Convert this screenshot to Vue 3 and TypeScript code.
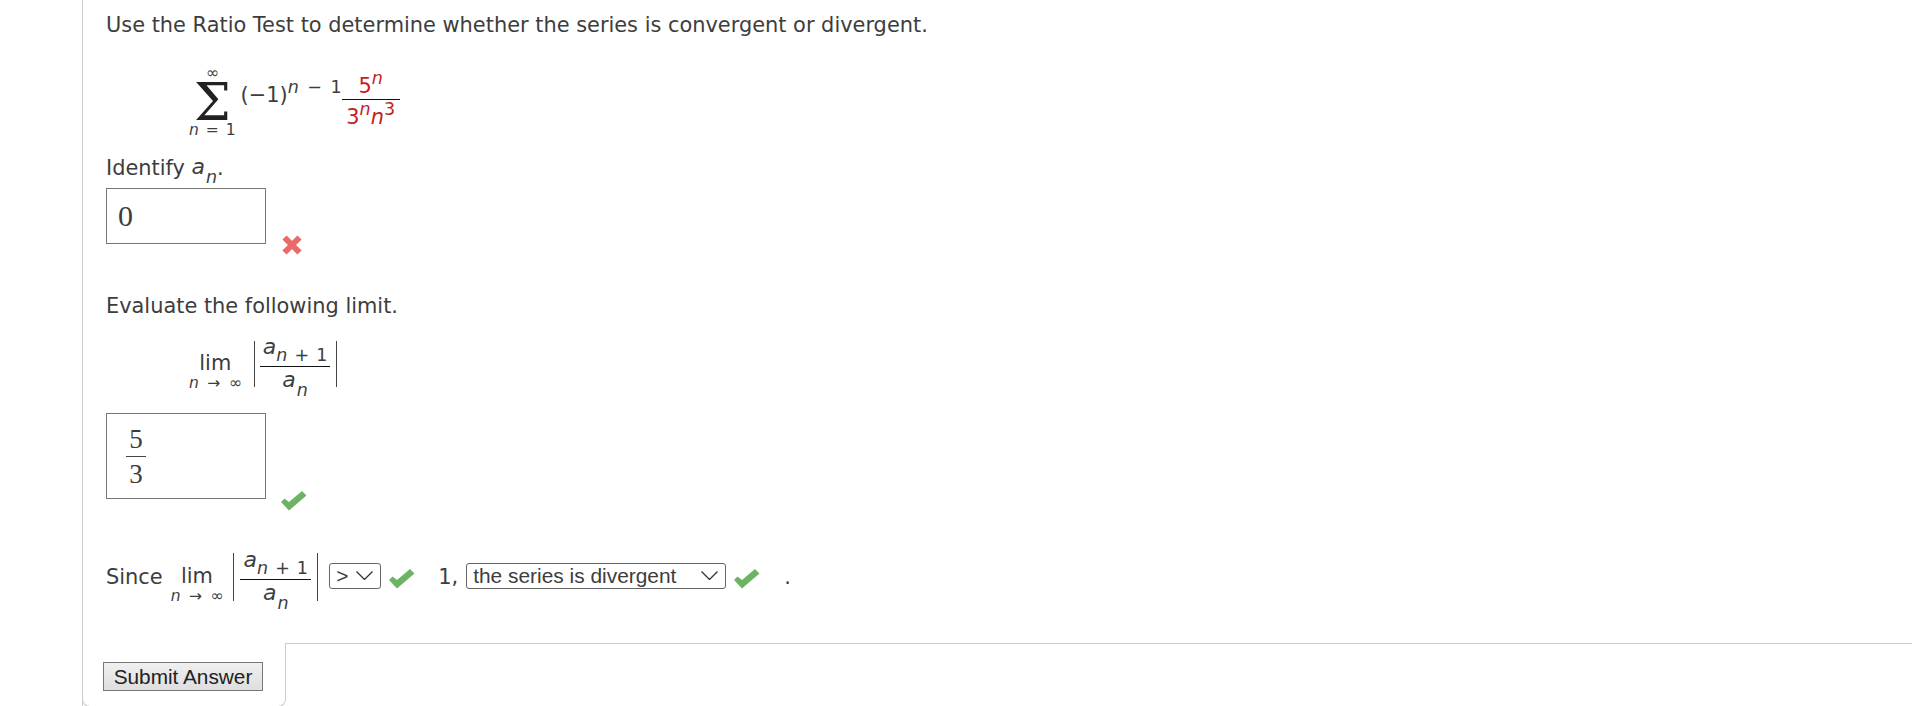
<script setup lang="ts">
const checkPath = 'M0 11 L3.500 7.500 L8 11 L21 0 L25.500 4.500 L8 19.500 Z'
const chevronPath = 'M0.500 0.500 L8.500 8.500 L16.500 0.500'
</script>

<template>
  <div class="page">
    <div class="card">
      <p class="line first">Use the Ratio Test to determine whether the series is convergent or divergent.</p>

      <div class="sum-block">
        <span class="sum">
          <span class="limit">∞</span>
          <span class="sigma">Σ</span>
          <span class="limit"><i>n</i> = 1</span>
        </span>
        <span class="term">(−1)<sup><i>n</i> − 1</sup></span>
        <span class="frac red">
          <span class="num">5<sup><i>n</i></sup></span>
          <span class="den">3<sup><i>n</i></sup><i>n</i><sup>3</sup></span>
        </span>
      </div>

      <p class="line identify">Identify <i class="big-a">a</i><sub><i>n</i></sub>.</p>
      <div class="answer-row">
        <div class="answer short"><span class="serif-num">0</span></div>
        <svg class="mark cross" width="22" height="22" viewBox="0 0 22 22">
          <path d="M3.500 3.500 L18.500 18.500 M18.500 3.500 L3.500 18.500" fill="none" stroke="#e96a6a" stroke-width="6" />
        </svg>
      </div>

      <p class="line evaluate">Evaluate the following limit.</p>

      <div class="lim-block">
        <span class="lim">
          <span class="lim-word">lim</span>
          <span class="limit arrow"><i>n</i> → ∞</span>
        </span>
        <span class="abs">
          <span class="frac">
            <span class="num"><i class="big-a">a</i><sub><i>n</i> + 1</sub></span>
            <span class="den"><i class="big-a">a</i><sub><i>n</i></sub></span>
          </span>
        </span>
      </div>

      <div class="answer-row">
        <div class="answer tall">
          <span class="serif-frac"><span>5</span><span>3</span></span>
        </div>
        <svg class="mark" width="26" height="20" viewBox="0 0 26 20">
          <path :d="checkPath" fill="#6cb464" />
        </svg>
      </div>

      <div class="since-row">
        <span>Since</span>
        <span class="lim since-lim">
          <span class="lim-word">lim</span>
          <span class="limit arrow"><i>n</i> → ∞</span>
        </span>
        <span class="abs since-abs">
          <span class="frac">
            <span class="num"><i class="big-a">a</i><sub><i>n</i> + 1</sub></span>
            <span class="den"><i class="big-a">a</i><sub><i>n</i></sub></span>
          </span>
        </span>
        <span class="select small-select">&gt;
          <svg width="17" height="9" viewBox="0 0 17 9"><path :d="chevronPath" fill="none" stroke="#333" stroke-width="1.300" /></svg>
        </span>
        <svg class="inline-mark" width="26" height="20" viewBox="0 0 26 20">
          <path :d="checkPath" fill="#6cb464" />
        </svg>
        <span class="one">1,</span>
        <span class="select wide-select">the series is divergent
          <svg width="17" height="9" viewBox="0 0 17 9"><path :d="chevronPath" fill="none" stroke="#333" stroke-width="1.300" /></svg>
        </span>
        <svg class="inline-mark" width="26" height="20" viewBox="0 0 26 20">
          <path :d="checkPath" fill="#6cb464" />
        </svg>
        <span class="dot">.</span>
      </div>

      <div class="footer">
        <div class="footer-left">
          <button class="submit" type="button">Submit Answer</button>
        </div>
        <div class="footer-right"></div>
      </div>
    </div>
  </div>
</template>

<style scoped>
.page {
  height: 706px;
  width: 1912px;
  padding-left: 82px;
  box-sizing: border-box;
  overflow: hidden;
  background: #fff;
  color: #3d3d3d;
  font-family: "DejaVu Sans", Verdana, sans-serif;
  font-size: 20.900px;
}

.card {
  height: 707px;
  box-sizing: border-box;
  border-left: 1px solid #ccc;
  padding-left: 23px;
  display: flex;
  flex-direction: column;
}

.line {
  margin: 0;
  line-height: 24px;
  white-space: nowrap;
}

.first {
  margin-top: 13px;
}

.identify {
  margin-top: 15px;
}

.evaluate {
  margin-top: 50px;
}

.sum-block {
  display: flex;
  align-items: center;
  margin-top: 27px;
  height: 76px;
  padding-left: 83px;
}

.sum {
  display: inline-flex;
  flex-direction: column;
  align-items: center;
  margin-right: 5px;
}

.limit {
  font-size: 15.500px;
  line-height: 17px;
  word-spacing: 2px;
  white-space: nowrap;
}

.arrow {
  word-spacing: 3.500px;
}

.sigma {
  font-family: "DejaVu Serif", serif;
  font-size: 52px;
  line-height: 40px;
  color: #222;
}

.term {
  margin-top: -15px;
  white-space: nowrap;
}

sup,
sub {
  font-size: 17.500px;
  line-height: 0;
  word-spacing: 3px;
}

sup {
  vertical-align: 9px;
}

sub {
  vertical-align: -8px;
  margin-left: 1px;
  word-spacing: 1.500px;
}

.big-a {
  font-size: 22px;
  vertical-align: 1px;
}

.frac {
  display: inline-flex;
  flex-direction: column;
  align-items: center;
  text-align: center;
  white-space: nowrap;
}

.num {
  padding: 0 3px 6px;
  line-height: 24px;
}

.num sub {
  vertical-align: -6px;
  margin-left: 0;
}

.den {
  align-self: stretch;
  padding: 1px 3px 0;
  border-top: 1px solid #111;
  line-height: 24px;
}

.red {
  color: #c5221c;
  width: 58px;
  margin-top: -1px;
}

.red .num {
  padding-bottom: 1px;
}

.red .den {
  padding-top: 5px;
}

.answer-row {
  display: flex;
  align-items: flex-end;
  gap: 15px;
}

.answer {
  width: 160px;
  box-sizing: border-box;
  border: 1px solid #777;
  display: flex;
  align-items: center;
  padding-left: 11px;
}

.short {
  height: 56px;
  margin-top: 8px;
}

.tall {
  height: 86px;
  margin-top: 24px;
  padding-left: 19px;
}

.serif-num {
  font-family: "Liberation Serif", serif;
  font-size: 30px;
}

.serif-frac {
  display: inline-flex;
  flex-direction: column;
  align-items: center;
  font-family: "Liberation Serif", serif;
  font-size: 27px;
  line-height: 34px;
}

.serif-frac span:first-child {
  border-bottom: 1px solid #444;
  width: 20px;
  text-align: center;
}

.mark {
  margin-bottom: -12px;
}

.lim-block {
  display: flex;
  align-items: center;
  margin-top: 21px;
  height: 50px;
  padding-left: 83px;
}

.lim {
  display: inline-flex;
  flex-direction: column;
  align-items: center;
  margin-top: 14px;
}

.lim-word {
  line-height: 24px;
}

.abs {
  display: inline-flex;
  justify-content: center;
  margin-left: 12px;
  width: 83px;
  box-sizing: border-box;
  border-left: 1px solid #444;
  border-right: 1px solid #444;
  height: 46px;
  align-items: center;
}

.since-abs {
  height: 48px;
  width: 85px;
  margin-left: 10px;
}

.since-row {
  display: flex;
  align-items: center;
  margin-top: 47px;
  height: 62px;
  white-space: nowrap;
}

.since-lim {
  margin-left: 8px;
  margin-top: 15px;
}

.select {
  display: inline-flex;
  align-items: center;
  justify-content: space-between;
  height: 26px;
  margin-top: -3px;
  box-sizing: border-box;
  border: 1px solid #666;
  border-radius: 3px;
  font-family: "Liberation Sans", Arial, sans-serif;
  padding: 0 7px 0 6px;
}

.small-select {
  width: 52px;
  margin-left: 11px;
}

.wide-select {
  width: 260px;
}

.inline-mark {
  margin-left: 8px;
  margin-top: 3px;
}

.one {
  margin-left: 23px;
  margin-right: 8px;
}

.dot {
  margin-left: 24px;
}

.footer {
  margin-top: auto;
  margin-left: -24px;
  display: flex;
  height: 64px;
}

.footer-left {
  width: 204px;
  flex: none;
  box-sizing: border-box;
  border: 1px solid #ccc;
  border-top: 0;
  border-radius: 0 0 8px 8px;
  padding: 19px 0 0 20px;
}

.footer-right {
  flex: 1;
  border-top: 1px solid #ccc;
}

.submit {
  display: block;
  width: 160px;
  height: 29px;
  padding: 0;
  border: 1px solid #777;
  background: linear-gradient(#f0f0f0, #dedede);
  color: #222;
  font-family: "Liberation Sans", Arial, sans-serif;
  font-size: 20.800px;
}
</style>
